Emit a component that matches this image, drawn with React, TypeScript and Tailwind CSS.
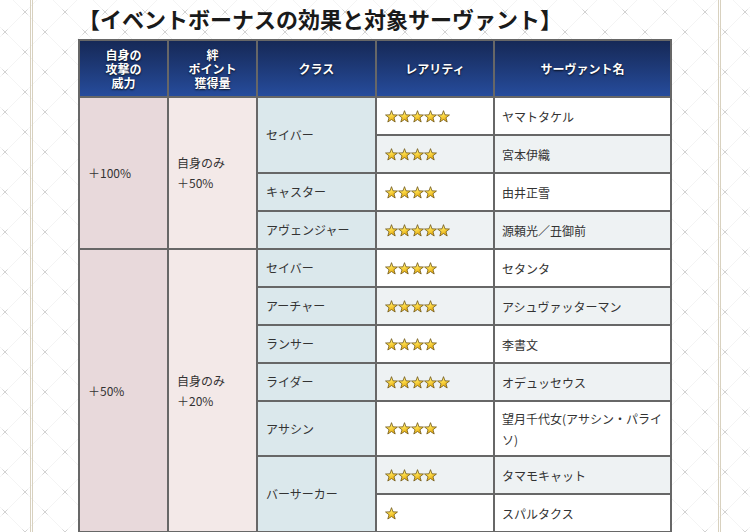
import React, { useId } from "react";

function Star() {
  const id = useId().replace(/:/g, "");
  return (
    <svg width="13" height="13" viewBox="0 0 12 12" className="block shrink-0">
      <defs>
        <linearGradient id={`g${id}`} x1="0" y1="0" x2="0.4" y2="1">
          <stop offset="0" stopColor="#fff8c0" />
          <stop offset="0.5" stopColor="#fddc4a" />
          <stop offset="1" stopColor="#e6ac10" />
        </linearGradient>
      </defs>
      <path
        d="M6 0.6 L7.41 4.46 L11.52 4.61 L8.28 7.14 L9.41 11.09 L6 8.8 L2.59 11.09 L3.72 7.14 L0.48 4.61 L4.59 4.46 Z"
        fill={`url(#g${id})`}
        stroke="#6b5210"
        strokeWidth="0.7"
        strokeLinejoin="round"
      />
    </svg>
  );
}

function Stars({ n }: { n: number }) {
  return (
    <div className="flex">
      {Array.from({ length: n }).map((_, i) => (
        <Star key={i} />
      ))}
    </div>
  );
}

type Row = { cls?: string; clsSpan?: number; stars: number; name: string[] };

const groups: { power: string; bond: [string, string]; rows: Row[] }[] = [
  {
    power: "＋100%",
    bond: ["自身のみ", "＋50%"],
    rows: [
      { cls: "セイバー", clsSpan: 2, stars: 5, name: ["ヤマトタケル"] },
      { stars: 4, name: ["宮本伊織"] },
      { cls: "キャスター", stars: 4, name: ["由井正雪"] },
      { cls: "アヴェンジャー", stars: 5, name: ["源頼光／丑御前"] },
    ],
  },
  {
    power: "＋50%",
    bond: ["自身のみ", "＋20%"],
    rows: [
      { cls: "セイバー", stars: 4, name: ["セタンタ"] },
      { cls: "アーチャー", stars: 4, name: ["アシュヴァッターマン"] },
      { cls: "ランサー", stars: 4, name: ["李書文"] },
      { cls: "ライダー", stars: 5, name: ["オデュッセウス"] },
      { cls: "アサシン", stars: 4, name: ["望月千代女(アサシン・パライ", "ソ)"] },
      { cls: "バーサーカー", clsSpan: 2, stars: 4, name: ["タマモキャット"] },
      { stars: 1, name: ["スパルタクス"] },
    ],
  },
];

const headCls =
  "flex items-center justify-center text-center text-white font-bold text-[12px] leading-[14px] bg-linear-to-b from-[#162957] to-[#264c9c] [text-shadow:0_1px_2px_rgba(0,0,0,0.85)]";

const spanCls: Record<number, string> = {
  1: "row-span-1",
  2: "row-span-2",
  3: "row-span-3",
  4: "row-span-4",
  5: "row-span-5",
  6: "row-span-6",
  7: "row-span-7",
};

export default function App() {
  let rowIndex = 0;
  const cells: React.ReactNode[] = [];
  groups.forEach((g, gi) => {
    g.rows.forEach((r, ri) => {
      if (ri === 0) {
        cells.push(
          <div
            key={`p${gi}`}
            className={`${spanCls[g.rows.length]} flex items-center pl-[8px] bg-[#e8d9db]`}
          >
            {g.power}
          </div>
        );
        cells.push(
          <div
            key={`b${gi}`}
            className={`${spanCls[g.rows.length]} flex flex-col justify-center pl-[8px] leading-[20px] bg-[#f3e9e8]`}
          >
            <span>{g.bond[0]}</span>
            <span>{g.bond[1]}</span>
          </div>
        );
      }
      if (r.cls) {
        cells.push(
          <div
            key={`c${gi}-${ri}`}
            className={`${spanCls[r.clsSpan ?? 1]} flex items-center pl-[8px] bg-[#dbe8ec]`}
          >
            {r.cls}
          </div>
        );
      }
      const alt = rowIndex % 2 === 1 ? "bg-[#eef2f3]" : "bg-white";
      cells.push(
        <div key={`s${gi}-${ri}`} className={`flex items-center pl-[8px] ${alt}`}>
          <Stars n={r.stars} />
        </div>
      );
      cells.push(
        <div
          key={`n${gi}-${ri}`}
          className={`flex flex-col justify-center pl-[7px] leading-[21px] ${alt}`}
        >
          {r.name.map((line, li) => (
            <span key={li} className="whitespace-nowrap">
              {line}
            </span>
          ))}
        </div>
      );
      rowIndex++;
    });
  });

  return (
    <div className="relative w-[750px] h-[532px] overflow-hidden bg-white font-['Noto_Sans_CJK_JP','Noto_Sans',sans-serif]">
      <svg className="absolute inset-0 w-full h-full" aria-hidden="true">
        <defs>
          <pattern id="bgx" width="40" height="40" patternUnits="userSpaceOnUse">
            <g stroke="#f1f1f1" strokeWidth="0.8">
              <line x1="0" y1="37" x2="37" y2="0" />
              <line x1="37" y1="40" x2="40" y2="37" />
              <line x1="13" y1="0" x2="40" y2="27" />
              <line x1="0" y1="27" x2="13" y2="40" />
            </g>
            <g stroke="#c9c9c9" strokeWidth="0.8">
              <line x1="22.5" y1="9.5" x2="27.5" y2="14.5" />
              <line x1="27.5" y1="9.5" x2="22.5" y2="14.5" />
              <line x1="2.5" y1="29.5" x2="7.5" y2="34.5" />
              <line x1="7.5" y1="29.5" x2="2.5" y2="34.5" />
            </g>
          </pattern>
        </defs>
        <rect width="100%" height="100%" fill="url(#bgx)" />
      </svg>
      <div className="relative ml-[30px] w-[691px] h-full border-x-[3px] border-double border-[#d8d1bf]">
        <h2 className="ml-[45px] h-[39px] text-[22px] font-bold leading-[37px] text-[#1a1a1a] whitespace-nowrap">
          【イベントボーナスの効果と対象サーヴァント】
        </h2>
        <div className="ml-[45px] w-[594px] grid grid-cols-[87px_87px_117px_116px_175px] grid-rows-[55px_repeat(8,36px)_53px_36px_36px] gap-[2px] p-[2px] bg-[#676767] text-[12px] text-[#333]">
          <div className={headCls}>
            自身の
            <br />
            攻撃の
            <br />
            威力
          </div>
          <div className={headCls}>
            絆
            <br />
            ポイント
            <br />
            獲得量
          </div>
          <div className={headCls}>クラス</div>
          <div className={headCls}>レアリティ</div>
          <div className={headCls}>サーヴァント名</div>
          {cells}
        </div>
      </div>
    </div>
  );
}
